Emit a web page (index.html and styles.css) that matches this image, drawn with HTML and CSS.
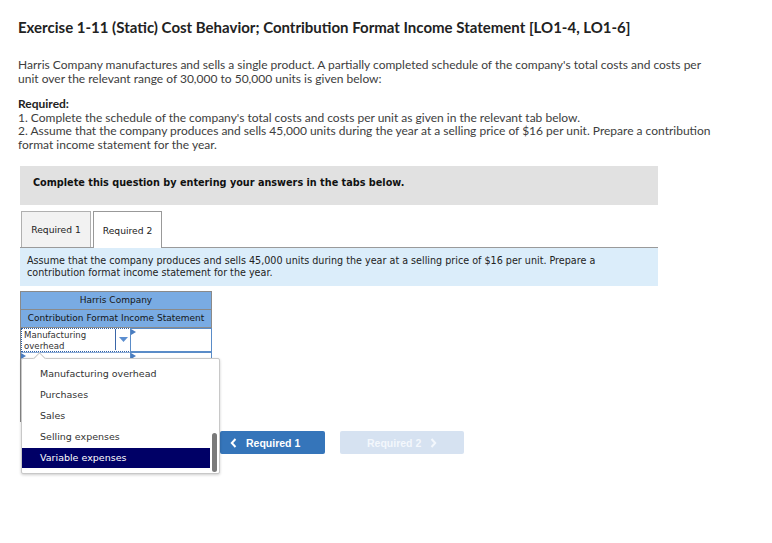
FILE: index.html
```html
<!DOCTYPE html>
<html>
<head>
<meta charset="utf-8">
<link rel="stylesheet" href="styles.css">
</head>
<body>
<div class="page">
  <h1 class="title">Exercise 1-11 (Static) Cost Behavior; Contribution Format Income Statement [LO1-4, LO1-6]</h1>
  <p class="para">Harris Company manufactures and sells a single product. A partially completed schedule of the company's total costs and costs per unit over the relevant range of 30,000 to 50,000 units is given below:</p>
  <p class="req-label">Required:</p>
  <p class="para req-list">1. Complete the schedule of the company's total costs and costs per unit as given in the relevant tab below.<br>2. Assume that the company produces and sells 45,000 units during the year at a selling price of $16 per unit. Prepare a contribution format income statement for the year.</p>

  <div class="question">
    <div class="banner">Complete this question by entering your answers in the tabs below.</div>
    <div class="tabs">
      <div class="tab">Required 1</div>
      <div class="tab active">Required 2</div>
    </div>
    <div class="instructions">Assume that the company produces and sells 45,000 units during the year at a selling price of $16 per unit. Prepare a contribution format income statement for the year.</div>

    <div class="work">
      <div class="sheet-wrap">
        <div class="sheet">
          <div class="head">Harris Company</div>
          <div class="head">Contribution Format Income Statement</div>
          <div class="row">
            <div class="select-cell">
              <span class="select-text">Manufacturing overhead</span>
              <span class="select-btn"><svg width="9" height="5" viewBox="0 0 9 5"><path d="M0 0h9L4.5 5z" fill="#5b8ed0"/></svg></span>
            </div>
            <div class="input-cell"><span class="marker"></span></div>
          </div>
          <div class="row">
            <div class="blank-cell"><span class="marker"></span></div>
            <div class="input-cell"><span class="marker"></span></div>
          </div>
        </div>

        <div class="popup">
          <span class="notch"></span>
          <ul class="options">
            <li>Manufacturing overhead</li>
            <li>Purchases</li>
            <li>Sales</li>
            <li>Selling expenses</li>
            <li class="selected">Variable expenses</li>
          </ul>
          <span class="scroll-thumb"></span>
        </div>
      </div>

      <div class="nav">
        <button class="nav-btn prev"><svg width="7" height="10" viewBox="0 0 7 10"><path d="M5.5 1L1.8 5l3.7 4" fill="none" stroke="#fff" stroke-width="2"/></svg><span>Required 1</span></button>
        <button class="nav-btn next"><span>Required 2</span><svg width="7" height="10" viewBox="0 0 7 10"><path d="M1.5 1l3.7 4-3.7 4" fill="none" stroke="#f3f7fc" stroke-width="2"/></svg></button>
      </div>
    </div>
  </div>
</div>
</body>
</html>
```
FILE: styles.css
```css
* { box-sizing: border-box; }
body { margin: 0; background: #fff; }
.page { padding: 17px 0 40px 18px; width: 772px; font-family: Lato, "Open Sans", sans-serif; color: #333; }
.title { margin: 0; font-size: 15px; line-height: 20px; font-weight: 700; color: #222; }
.para { margin: 21px 0 0; font-size: 12px; line-height: 13.5px; width: 700px; color: #3d3d3d; }
.req-label { margin: 12px 0 0; font-size: 12px; line-height: 13.5px; font-weight: 700; color: #222; }
.req-list { margin-top: 0; }

.question { margin: 15px 0 0 2px; width: 638px; font-family: "DejaVu Sans", Verdana, sans-serif; }
.banner { background: #e1e1e1; height: 39px; padding: 10px 0 0 13px; font-size: 9.7px; font-weight: 700; color: #111; line-height: 14px; }
.tabs { display: flex; gap: 2px; margin-top: 6px; padding-left: 1px; height: 37px; align-items: flex-start; }
.tab { height: 36px; width: 70px; border: 1px solid #b0b0b0; border-bottom: none; background: #f2f2f2; font-size: 9.2px; color: #222; display: flex; align-items: center; justify-content: center; }
.tab.active { width: 69px; height: 37px; background: #fff; border-color: #999; position: relative; z-index: 1; }
.instructions { background: #dbedfa; border-top: 1px solid #9a9a9a; margin-top: -1px; padding: 7px 20px 6px 7px; font-size: 9.6px; line-height: 12px; color: #222; height: 39px; }

.work { display: flex; align-items: flex-start; margin-top: 5px; }
.sheet-wrap { position: relative; width: 200px; height: 184px; flex: none; }
.sheet { width: 192px; height: 131px; border: 1px solid #8a8a8a; border-right: none; font-size: 9px; }
.head { height: 18px; background: #79abe3; border-bottom: 1px solid #8a8a8a; border-right: 1px solid #8a8a8a; text-align: center; line-height: 17px; color: #161616; white-space: nowrap; }
.row { display: flex; height: 24px; }
.select-cell { width: 110px; border: 1px dotted #2b5fa8; display: flex; background: #fff; }
.select-text { flex: 1; font-size: 8.6px; line-height: 10.5px; padding: 1px 0 0 2px; color: #333; }
.select-btn { width: 15px; border-left: 1px solid #3a66a8; display: flex; align-items: center; justify-content: center; margin: 0 0 1px; }
.input-cell { width: 82px; border: 1px solid #5a8cc8; margin-left: -1px; position: relative; background: #fff; }
.marker { position: absolute; left: 0; top: 0; width: 0; height: 0; border-top: 3px solid transparent; border-bottom: 3px solid transparent; border-left: 5px solid #4a7dc0; }
.blank-cell { width: 110px; border-top: 1px solid #8aaad5; position: relative; }

.popup { position: absolute; left: 1px; top: 67px; width: 199px; height: 116px; background: #fff; border: 1px solid #c8c8c8; border-radius: 2px; box-shadow: 0 1px 3px rgba(0,0,0,0.2); z-index: 5; }
.notch { position: absolute; left: 13px; top: -5px; width: 9px; height: 9px; background: #fff; border-left: 1px solid #c8c8c8; border-top: 1px solid #c8c8c8; transform: rotate(45deg); }
.options { list-style: none; margin: 0; padding: 4px 0 0; font-size: 9.5px; color: #333; }
.options li { height: 21px; line-height: 21px; padding-left: 18px; margin-right: 9px; white-space: nowrap; }
.options li.selected { background: #000066; color: #fff; height: 20px; line-height: 20px; margin-top: 1px; }
.scroll-thumb { position: absolute; right: 2px; top: 74px; width: 5px; height: 39px; background: #7a7a7a; border-radius: 3px; }

.nav { display: flex; gap: 15px; margin: 140px 0 0 0; }
.nav-btn { height: 23px; border: none; border-radius: 2px; font-family: "Liberation Sans", Arial, sans-serif; font-weight: 700; font-size: 10.5px; display: flex; align-items: center; gap: 9px; padding: 0; }
.prev { width: 105px; background: #3575ba; color: #fff; padding-left: 10px; }
.next { width: 124px; background: #d6e2f1; color: #f3f7fc; justify-content: flex-start; padding-left: 27px; }
```
